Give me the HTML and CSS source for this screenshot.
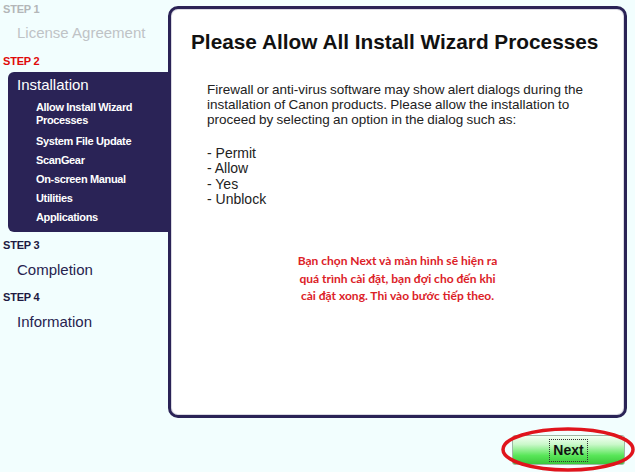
FILE: index.html
```html
<!DOCTYPE html>
<html lang="en">
<head>
    <meta charset="UTF-8">
    <title>Setup - Installation</title>
    <link rel="stylesheet" href="styles.css">
</head>
<body>
    <div class="wizard">
        <div class="sidebar">
            <div class="step-label step-done">STEP 1</div>
            <div class="step-name step-name-done">License Agreement</div>

            <div class="step-label step-current">STEP 2</div>
            <div class="step-active">
                <div class="active-title">Installation</div>
                <ul class="substeps">
                    <li>Allow Install Wizard<br>Processes</li>
                    <li>System File Update</li>
                    <li>ScanGear</li>
                    <li>On-screen Manual</li>
                    <li>Utilities</li>
                    <li>Applications</li>
                </ul>
            </div>

            <div class="step-label step-next">STEP 3</div>
            <div class="step-name">Completion</div>

            <div class="step-label step-next step-four">STEP 4</div>
            <div class="step-name">Information</div>
        </div>

        <div class="main">
            <div class="panel">
                <h1>Please Allow All Install Wizard Processes</h1>
                <p class="intro">
                    Firewall or anti-virus software may show alert dialogs during the<br>
                    installation of Canon products. Please allow the installation to<br>
                    proceed by selecting an option in the dialog such as:
                </p>
                <ul class="options">
                    <li>- Permit</li>
                    <li>- Allow</li>
                    <li>- Yes</li>
                    <li>- Unblock</li>
                </ul>
                <p class="note">
                    Bạn chọn Next và màn hình sẽ hiện ra<br>
                    quá trình cài đặt, bạn đợi cho đến khi<br>
                    cài đặt xong. Thì vào bước tiếp theo.
                </p>
            </div>
            <div class="footer">
                <div class="next-wrap">
                    <button type="button" class="next-btn"><span class="focus-box">Next</span></button>
                    <svg class="highlight" width="136" height="47" viewBox="0 0 136 47">
                        <ellipse cx="68" cy="23.5" rx="65" ry="20.5" fill="none" stroke="#e0141c" stroke-width="3.5"/>
                    </svg>
                </div>
            </div>
        </div>
    </div>
</body>
</html>
```

FILE: styles.css
```css
body {
    margin: 0;
    background-color: #f2fefe;
    font-family: Arial, "Liberation Sans", sans-serif;
    width: 635px;
    height: 472px;
    overflow: hidden;
}

.wizard {
    display: grid;
    grid-template-columns: 168px 1fr;
    align-items: start;
}

/* left column */
.sidebar {
    padding-top: 3px;
}

.step-label {
    font-size: 11px;
    font-weight: bold;
    line-height: 13px;
    padding-left: 3px;
    letter-spacing: -0.2px;
}

.step-done {
    color: #b3b6b8;
}

.step-current {
    color: #e00a0a;
    margin-top: 12px;
}

.step-next {
    color: #1e1a42;
    margin-top: 7px;
}

.step-four {
    margin-top: 11px;
}

.step-name {
    font-size: 15px;
    line-height: 20px;
    padding-left: 17px;
    margin-top: 8px;
    color: #27234f;
}

.step-name-done {
    color: #bfc3c6;
    margin-top: 7px;
}

.step-active {
    background-color: #2a2356;
    margin: 4px 0 0 8px;
    border-radius: 6px 0 0 6px;
    padding: 3px 0 8px 9px;
    color: #fff;
}

.active-title {
    font-size: 15px;
    line-height: 20px;
}

.substeps {
    list-style: none;
    margin: 6px 0 0;
    padding-left: 19px;
    display: flex;
    flex-direction: column;
    gap: 6px;
}

.substeps li {
    font-size: 11px;
    font-weight: bold;
    line-height: 13px;
    letter-spacing: -0.35px;
}

.substeps li:first-child {
    margin-bottom: 2px;
}

/* main panel */
.main {
    padding: 6px 8px 0 0;
}

.panel {
    box-sizing: border-box;
    height: 412px;
    background-color: #fff;
    border: 3px solid #2a2356;
    border-radius: 10px;
    box-shadow: inset 0 0 0 1px #d9d9e2;
    padding: 21px 20px 0;
}

h1 {
    margin: 0;
    font-size: 20.8px;
    line-height: 24px;
    font-weight: bold;
    color: #111;
}

.intro {
    margin: 28px 0 0 16px;
    font-size: 13.5px;
    line-height: 15px;
    word-spacing: -0.5px;
    color: #222;
}

.options {
    list-style: none;
    margin: 19px 0 0 16px;
    padding: 0;
    font-size: 14px;
    line-height: 15.3px;
    color: #222;
}

.note {
    margin: 45px 0 0;
    text-align: center;
    font-family: Lato, "Open Sans", sans-serif;
    font-weight: bold;
    font-size: 12px;
    line-height: 17.5px;
    color: #dc2228;
}

/* footer with Next */
.footer {
    display: flex;
    justify-content: flex-end;
    padding: 17px 2px 0 0;
}

.next-wrap {
    position: relative;
}

.next-btn {
    display: flex;
    align-items: center;
    justify-content: center;
    width: 113px;
    height: 30px;
    padding: 0;
    border: 1px solid #9fb8a4;
    border-radius: 3px;
    background: linear-gradient(#f4fff4 0%, #caf8ca 30%, #58e658 70%, #3cc83c 100%);
    font-family: Arial, "Liberation Sans", sans-serif;
    font-size: 14px;
    font-weight: bold;
    color: #111;
}

.focus-box {
    border: 1px dotted #333;
    padding: 3px 3px;
    line-height: 15px;
}

.highlight {
    position: absolute;
    left: -12px;
    top: -9px;
}
```
